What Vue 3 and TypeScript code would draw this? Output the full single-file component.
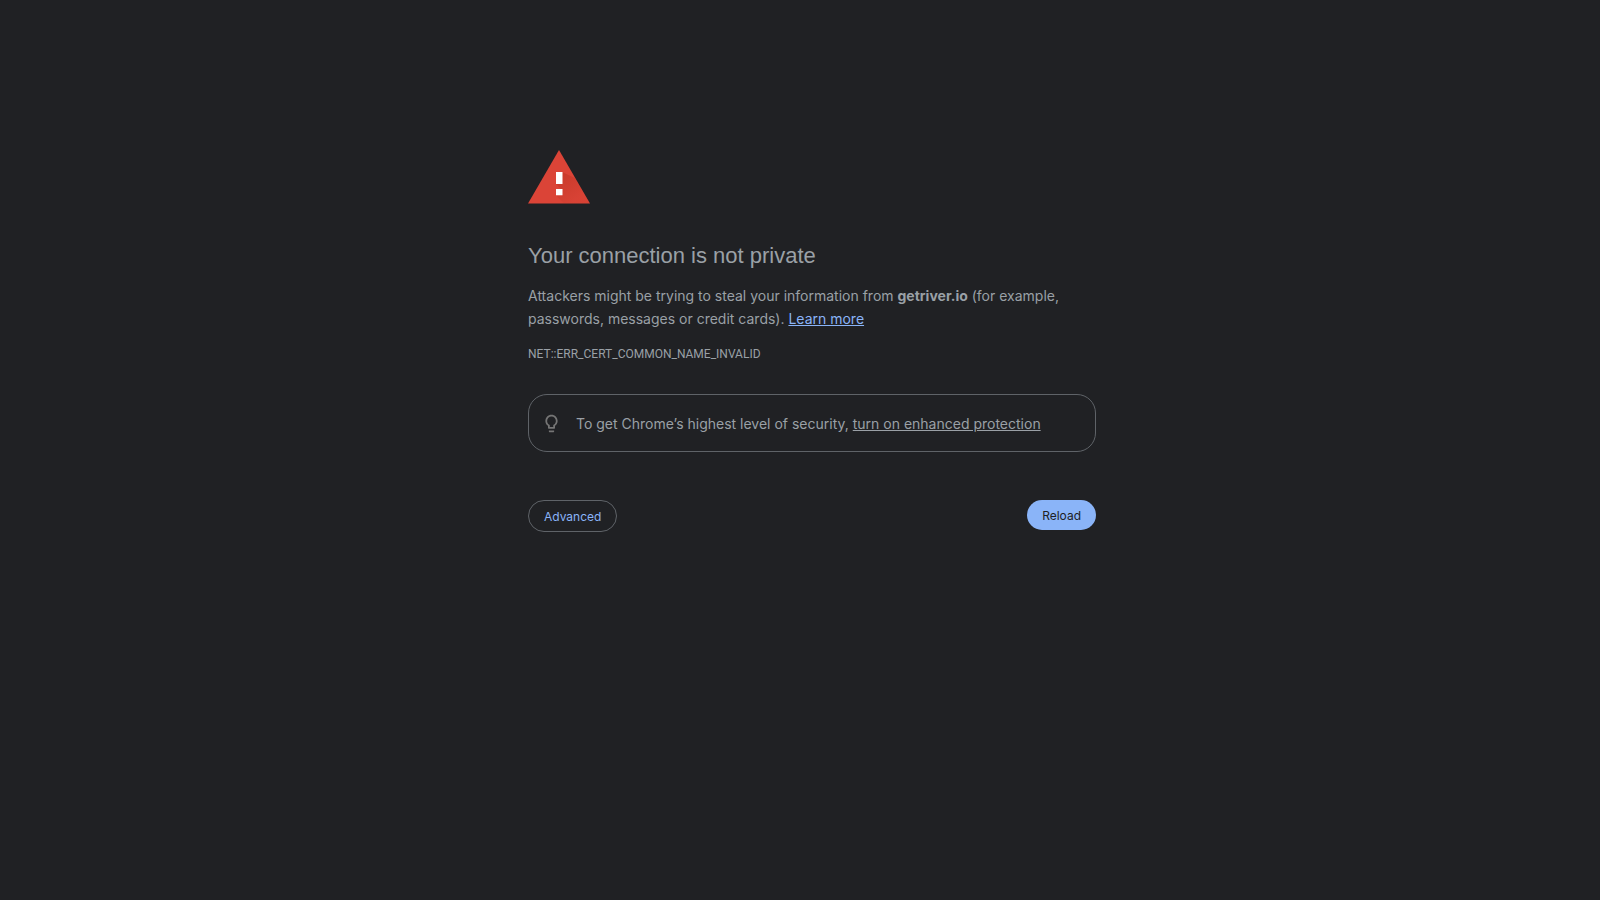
<script setup lang="ts">
import { ref } from 'vue'

const host = ref<string>('getriver.io')
const errorCode = ref<string>('NET::ERR_CERT_COMMON_NAME_INVALID')

function reload(): void {
  window.location.reload()
}
</script>

<template>
  <div class="page">
    <main class="interstitial">
      <svg class="warning" viewBox="0 0 62 54" aria-hidden="true">
        <defs>
          <linearGradient id="shade" x1="34" y1="22" x2="52" y2="46" gradientUnits="userSpaceOnUse">
            <stop offset="0" stop-color="#a52714" stop-opacity="0.34" />
            <stop offset="1" stop-color="#a52714" stop-opacity="0.06" />
          </linearGradient>
        </defs>
        <path d="M31 0L62 53.500H0z" fill="#db4437" />
        <path d="M34 22L47 28L61.700 53.500H36L28 45.500L34 45.500V40L28 34H34z" fill="url(#shade)" />
        <path d="M28 22h6.500v12H28zM28 39h6.500v6.300H28z" fill="#fff" />
      </svg>

      <h1>Your connection is not private</h1>
      <p class="message">
        Attackers might be trying to steal your information from <strong>{{ host }}</strong> (for example,
        passwords, messages or credit cards). <a class="learn" href="#">Learn more</a>
      </p>
      <p class="code">{{ errorCode }}</p>

      <section class="tip">
        <svg class="bulb" viewBox="0 0 24 24" aria-hidden="true">
          <path
            d="M9 21c0 .5.4 1 1 1h4c.6 0 1-.5 1-1v-1H9v1zm3-19C8.100 2 5 5.100 5 9c0 2.400 1.200 4.500 3 5.700V17c0 .5.4 1 1 1h6c.6 0 1-.5 1-1v-2.300c1.800-1.300 3-3.400 3-5.700 0-3.900-3.100-7-7-7zm2.900 11.100l-.9.600V16h-4v-2.300l-.9-.6C7.800 12.200 7 10.600 7 9c0-2.800 2.200-5 5-5s5 2.200 5 5c0 1.600-.8 3.200-2.100 4.100z"
          />
        </svg>
        <p>To get Chrome’s highest level of security, <a href="#">turn on enhanced protection</a></p>
      </section>

      <div class="actions">
        <button class="advanced" type="button">Advanced</button>
        <button class="reload" type="button" @click="reload">Reload</button>
      </div>
    </main>
  </div>
</template>

<style>
html,
body {
  margin: 0;
  background: #202124;
}
</style>

<style scoped>
.page {
  box-sizing: border-box;
  min-height: 100vh;
  padding: 150px 0 48px 24px;
  background: #202124;
  color: #9aa0a6;
  font-family: Inter, "Liberation Sans", sans-serif;
}

.interstitial {
  max-width: 568px;
  margin: 0 auto;
}

.warning {
  display: block;
  width: 62px;
  height: 54px;
}

h1 {
  margin: 38px 0 0;
  font-family: "Liberation Sans", Arial, sans-serif;
  font-size: 22px;
  font-weight: 400;
  line-height: 28px;
}

.message {
  margin: 14px 0 0;
  font-size: 14px;
  line-height: 23px;
}

.learn {
  color: #8ab4f8;
}

.code {
  margin: 14px 0 0;
  font-family: Roboto, "Liberation Sans", sans-serif;
  font-size: 12px;
  line-height: 20px;
}

.tip {
  display: flex;
  align-items: center;
  gap: 14px;
  box-sizing: border-box;
  min-height: 58px;
  margin-top: 30px;
  padding: 12px;
  border: 1px solid #5f6368;
  border-radius: 19px;
}

.tip p {
  margin: 0;
  font-size: 14px;
  line-height: 23px;
}

.tip a {
  color: inherit;
}

.bulb {
  flex: none;
  width: 21px;
  height: 21px;
  fill: #757575;
}

.actions {
  display: flex;
  justify-content: space-between;
  align-items: flex-start;
  margin-top: 48px;
}

button {
  border: 0;
  border-radius: 16px;
  padding: 8px 15px 6px;
  font-family: inherit;
  font-size: 12px;
  line-height: 16px;
  cursor: pointer;
}

.advanced {
  border: 1px solid #5f6368;
  background: transparent;
  color: #8ab4f8;
}

.reload {
  background: #8ab4f8;
  color: #202124;
}
</style>
